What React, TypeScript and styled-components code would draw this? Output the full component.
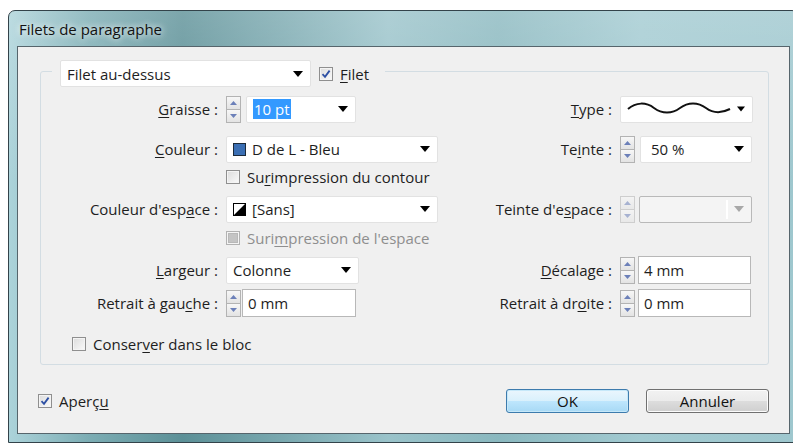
import styled, { createGlobalStyle } from "styled-components"

const GlobalStyle = createGlobalStyle`
  html, body {
    margin: 0;
    background: #fff;
    overflow: hidden;
  }
  body {
    font-family: "Open Sans", "Noto Sans", sans-serif;
    font-size: 15px;
    color: #1e1e1e;
  }
`

const Window = styled.div`
  margin: 10px 0 0 8px;
  width: 791px;
  box-sizing: border-box;
  border: 1px solid #33434a;
  border-radius: 7px 7px 0 0;
  padding: 0 8px 8px;
  background:
    linear-gradient(to bottom, rgba(255, 255, 255, 0.2), rgba(255, 255, 255, 0) 40%),
    linear-gradient(to right, #acd3da 0%, #7cadb4 10%, #5c9097 22%, #78a7ae 34%, #9ac3ca 48%, #8ab8bf 62%, #a2cad1 80%, #9ec7ce 100%);
`

const TitleBar = styled.div`
  height: 35px;
  display: flex;
  align-items: center;
  padding-left: 2px;
  font-size: 15px;
  color: #121212;
  text-shadow: 0 0 6px rgba(255, 255, 255, 0.85), 0 0 10px rgba(255, 255, 255, 0.6);
`

const Body = styled.div`
  border: 1px solid #56656c;
  background: #f0f0f0;
  padding: 9px 20px 0 22px;
  height: 388px;
  box-sizing: border-box;
`

const Group = styled.fieldset`
  margin: 0;
  padding: 0 0 10px;
  min-width: 0;
  border: 1px solid #d3dde3;
  border-radius: 3px;
`

const Legend = styled.legend`
  margin-left: 11px;
  padding: 4px 16px 0 8px;
  display: flex;
  align-items: center;
  gap: 8px;
`

const Row = styled.div<{ $top: number; $short?: boolean }>`
  display: grid;
  grid-template-columns: 185px 212px 182px 132px;
  align-items: center;
  margin-top: ${(p) => p.$top}px;
  height: ${(p) => (p.$short ? 20 : 28)}px;
`

const Label = styled.span`
  text-align: right;
  padding-right: 8px;
  white-space: nowrap;
`

const Key = styled.span`
  text-decoration: underline;
  text-underline-offset: 2px;
`

const Cell = styled.div`
  display: flex;
  align-items: center;
`

const Select = styled.div<{ $w: number; $disabled?: boolean }>`
  width: ${(p) => p.$w}px;
  height: 27px;
  box-sizing: border-box;
  display: flex;
  align-items: center;
  gap: 6px;
  padding: 0 7px 0 6px;
  background: ${(p) => (p.$disabled ? "#f4f4f4" : "#fff")};
  border: 1px solid ${(p) => (p.$disabled ? "#b9b9b9" : "#e2e2e2")};
  border-radius: 2px;
`

const SelectText = styled.span`
  flex: 1;
  white-space: nowrap;
`

const Selected = styled.span`
  background: #3399ff;
  color: #fff;
  padding: 0 1px;
`

const DisabledInner = styled.div`
  flex: 1;
  height: 19px;
  border-right: 2px solid #fff;
  background: #f4f4f4;
  margin-left: -2px;
`

const Field = styled.div<{ $w: number }>`
  width: ${(p) => p.$w}px;
  height: 28px;
  box-sizing: border-box;
  display: flex;
  align-items: center;
  padding-left: 5px;
  background: #fff;
  border: 1px solid #b8b8b8;
`

const SpinBox = styled.div<{ $gap: number; $disabled?: boolean }>`
  display: flex;
  flex-direction: column;
  width: 15px;
  height: 27px;
  margin-right: ${(p) => p.$gap}px;
  opacity: ${(p) => (p.$disabled ? 0.55 : 1)};
`

const SpinHalf = styled.div`
  flex: 1;
  display: flex;
  align-items: center;
  justify-content: center;
  border: 1px solid #b3b3b3;
  background: linear-gradient(#f7f7f7, #e3e3e3);
  & + & {
    border-top: none;
  }
`

const Check = styled.span<{ $disabled?: boolean }>`
  width: 14px;
  height: 14px;
  box-sizing: border-box;
  display: inline-flex;
  align-items: center;
  justify-content: center;
  flex: none;
  border: 1px solid ${(p) => (p.$disabled ? "#b2b2b2" : "#8f8f8f")};
  background: linear-gradient(135deg, #dcdcdc, #fafafa);
  box-shadow: inset 0 0 0 1px #f4f4f4;
`

const CheckFill = styled.span`
  width: 8px;
  height: 8px;
  background: #c4c4c4;
  border: 1px solid #b8b8b8;
`

const CheckLine = styled.label<{ $disabled?: boolean; $indent?: number }>`
  display: flex;
  align-items: center;
  gap: 7px;
  margin-left: ${(p) => p.$indent ?? 0}px;
  color: ${(p) => (p.$disabled ? "#8e8e8e" : "inherit")};
  white-space: nowrap;
`

const Swatch = styled.span<{ $color: string }>`
  width: 13px;
  height: 13px;
  box-sizing: border-box;
  background: ${(p) => p.$color};
  border: 1px solid #1b2a3a;
  flex: none;
`

const Footer = styled.div`
  display: flex;
  align-items: center;
  margin: 24px 0 0 -2px;
  height: 24px;
`

const Buttons = styled.div`
  margin-left: auto;
  display: flex;
  gap: 17px;
`

const Button = styled.button<{ $default?: boolean }>`
  width: 123px;
  height: 24px;
  font: inherit;
  font-size: 15px;
  color: #111;
  border-radius: 3px;
  border: 1px solid ${(p) => (p.$default ? "#3d7bad" : "#707070")};
  background: ${(p) =>
    p.$default
      ? "linear-gradient(#eaf6fd 0%, #d9f0fc 50%, #bee6fd 50%, #a7d9f5 100%)"
      : "linear-gradient(#f2f2f2 0%, #ebebeb 50%, #dddddd 50%, #cfcfcf 100%)"};
  box-shadow: inset 0 0 0 1px ${(p) => (p.$default ? "#c6e8f9" : "#fcfcfc")};
  padding: 0;
`

const Arrow = ({ color = "#000" }: { color?: string }) => (
  <svg width="10" height="6" viewBox="0 0 10 6">
    <path d="M0 0h10L5 6z" fill={color} />
  </svg>
)

const Tick = () => (
  <svg width="10" height="10" viewBox="0 0 10 10">
    <path d="M1.5 5.2 L4 7.8 L8.6 1.6" stroke="#2d4fa3" strokeWidth="1.8" fill="none" />
  </svg>
)

const Spinner = ({ gap = 4, disabled }: { gap?: number; disabled?: boolean }) => (
  <SpinBox $gap={gap} $disabled={disabled}>
    <SpinHalf>
      <svg width="7" height="4" viewBox="0 0 7 4">
        <path d="M0 4h7L3.5 0z" fill="#6c80b9" />
      </svg>
    </SpinHalf>
    <SpinHalf>
      <svg width="7" height="4" viewBox="0 0 7 4">
        <path d="M0 0h7L3.5 4z" fill="#6c80b9" />
      </svg>
    </SpinHalf>
  </SpinBox>
)

const CheckBox = ({ checked, disabled }: { checked?: boolean; disabled?: boolean }) => (
  <Check $disabled={disabled}>
    {checked && <Tick />}
    {disabled && <CheckFill />}
  </Check>
)

const NoneSwatch = () => (
  <svg width="13" height="13" viewBox="0 0 13 13">
    <rect x="0.5" y="0.5" width="12" height="12" fill="#fff" stroke="#000" />
    <path d="M1 12 L12 1 L12 12 z" fill="#000" />
  </svg>
)

const Wave = () => (
  <svg width="104" height="14" viewBox="0 0 104 14">
    <path
      d="M1 8 C 9 1, 19 1, 27 7 S 45 13, 53 7 S 71 1, 79 7 S 95 12, 103 8"
      stroke="#111"
      strokeWidth="2"
      fill="none"
    />
  </svg>
)

export default function App() {
  return (
    <>
      <GlobalStyle />
      <Window>
        <TitleBar>Filets de paragraphe</TitleBar>
        <Body>
          <Group>
            <Legend>
              <Select $w={251}>
                <SelectText>Filet au-dessus</SelectText>
                <Arrow />
              </Select>
              <CheckLine>
                <CheckBox checked />
                <span>
                  <Key>F</Key>ilet
                </span>
              </CheckLine>
            </Legend>

            <Row $top={8}>
              <Label>
                <Key>G</Key>raisse :
              </Label>
              <Cell>
                <Spinner gap={5} />
                <Select $w={110}>
                  <SelectText>
                    <Selected>10 pt</Selected>
                  </SelectText>
                  <Arrow />
                </Select>
              </Cell>
              <Label>
                <Key>T</Key>ype :
              </Label>
              <Cell>
                <Select $w={133}>
                  <SelectText>
                    <Wave />
                  </SelectText>
                  <Arrow />
                </Select>
              </Cell>
            </Row>

            <Row $top={12}>
              <Label>
                <Key>C</Key>ouleur :
              </Label>
              <Cell>
                <Select $w={213}>
                  <Swatch $color="#3b6fb4" />
                  <SelectText>D de L - Bleu</SelectText>
                  <Arrow />
                </Select>
              </Cell>
              <Label>
                Te<Key>i</Key>nte :
              </Label>
              <Cell>
                <Spinner gap={5} />
                <Select $w={112}>
                  <SelectText>&nbsp;50 %</SelectText>
                  <Arrow />
                </Select>
              </Cell>
            </Row>

            <Row $top={4} $short>
              <span />
              <CheckLine>
                <CheckBox />
                <span>
                  Su<Key>r</Key>impression du contour
                </span>
              </CheckLine>
            </Row>

            <Row $top={8}>
              <Label>
                Couleur d'esp<Key>a</Key>ce :
              </Label>
              <Cell>
                <Select $w={213}>
                  <NoneSwatch />
                  <SelectText>[Sans]</SelectText>
                  <Arrow />
                </Select>
              </Cell>
              <Label>
                Teinte d'e<Key>s</Key>pace :
              </Label>
              <Cell>
                <Spinner gap={4} disabled />
                <Select $w={113} $disabled>
                  <DisabledInner />
                  <Arrow color="#a8a8a8" />
                </Select>
              </Cell>
            </Row>

            <Row $top={5} $short>
              <span />
              <CheckLine $disabled>
                <CheckBox disabled />
                <span>
                  Suri<Key>m</Key>pression de l'espace
                </span>
              </CheckLine>
            </Row>

            <Row $top={8}>
              <Label>
                <Key>L</Key>argeur :
              </Label>
              <Cell>
                <Select $w={133}>
                  <SelectText>Colonne</SelectText>
                  <Arrow />
                </Select>
              </Cell>
              <Label>
                <Key>D</Key>écalage :
              </Label>
              <Cell>
                <Spinner gap={3} />
                <Field $w={113}>4 mm</Field>
              </Cell>
            </Row>

            <Row $top={5}>
              <Label>
                Retrait à gau<Key>c</Key>he :
              </Label>
              <Cell>
                <Spinner gap={1} />
                <Field $w={114}>0 mm</Field>
              </Cell>
              <Label>
                Retrait à dr<Key>o</Key>ite :
              </Label>
              <Cell>
                <Spinner gap={3} />
                <Field $w={113}>0 mm</Field>
              </Cell>
            </Row>

            <Row $top={17} $short>
              <CheckLine $indent={31}>
                <CheckBox />
                <span>
                  Conser<Key>v</Key>er dans le bloc
                </span>
              </CheckLine>
            </Row>
          </Group>

          <Footer>
            <CheckLine>
              <CheckBox checked />
              <span>
                Aperç<Key>u</Key>
              </span>
            </CheckLine>
            <Buttons>
              <Button $default>OK</Button>
              <Button>Annuler</Button>
            </Buttons>
          </Footer>
        </Body>
      </Window>
    </>
  )
}
